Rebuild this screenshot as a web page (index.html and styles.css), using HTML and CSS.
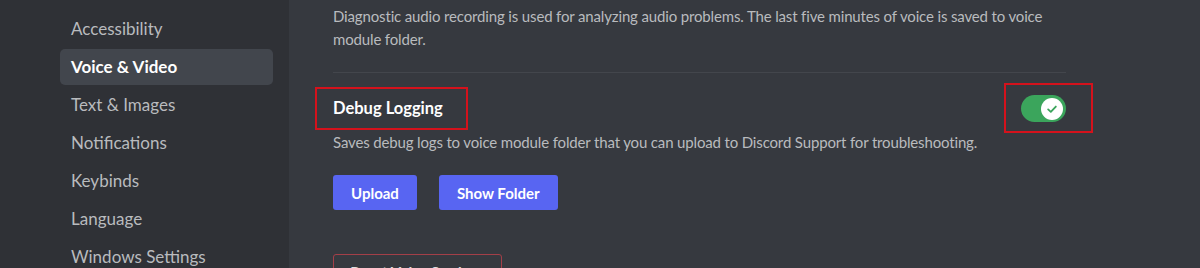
FILE: index.html
```html
<!DOCTYPE html>
<html lang="en">
<head>
<meta charset="utf-8">
<title>Voice &amp; Video Settings</title>
<link rel="stylesheet" href="styles.css">
</head>
<body>
<div class="app">
  <nav class="sidebar">
    <ul class="nav">
      <li class="nav-item">Appearance</li>
      <li class="nav-item">Accessibility</li>
      <li class="nav-item selected">Voice &amp; Video</li>
      <li class="nav-item">Text &amp; Images</li>
      <li class="nav-item">Notifications</li>
      <li class="nav-item">Keybinds</li>
      <li class="nav-item">Language</li>
      <li class="nav-item">Windows Settings</li>
    </ul>
  </nav>
  <main class="content">
    <p class="desc">Diagnostic audio recording is used for analyzing audio problems. The last five minutes of voice is saved to voice module folder.</p>
    <hr class="divider">
    <section class="setting">
      <div class="setting-head">
        <h3 class="title annotated">Debug Logging</h3>
        <div class="toggle-wrap annotated">
          <div class="toggle">
            <span class="knob">
              <svg viewBox="0 0 20 20" width="14" height="14" aria-hidden="true">
                <path d="M4.5 10.5 L8.3 14 L15.5 6.5" fill="none" stroke="#3ba55c" stroke-width="2.6" stroke-linecap="round" stroke-linejoin="round"/>
              </svg>
            </span>
          </div>
        </div>
      </div>
      <p class="desc">Saves debug logs to voice module folder that you can upload to Discord Support for troubleshooting.</p>
      <div class="buttons">
        <button class="btn">Upload</button>
        <button class="btn">Show Folder</button>
      </div>
    </section>
    <button class="reset">Reset Voice Settings</button>
  </main>
</div>
</body>
</html>
```
FILE: styles.css
```css
* { box-sizing: border-box; }
html, body {
  margin: 0;
  padding: 0;
  height: 100%;
  overflow: hidden;
  background: #36393f;
}
body {
  font-family: Lato, "Noto Sans", sans-serif;
  color: #b9bbbe;
}
.app {
  display: flex;
  height: 268px;
}
.sidebar {
  width: 289px;
  flex: none;
  background: #2f3136;
  padding: 0 16px 0 60px;
}
.nav {
  list-style: none;
  margin: -27px 0 0 0;
  padding: 0;
  display: flex;
  flex-direction: column;
  gap: 2px;
}
.nav-item {
  height: 36px;
  line-height: 36px;
  padding-left: 11px;
  border-radius: 5px;
  font-size: 17px;
  color: #b9bbbe;
  white-space: nowrap;
}
.nav-item.selected {
  background: #42464d;
  color: #ffffff;
  font-weight: 700;
}
.content {
  flex: 1;
  padding: 5px 0 0 44px;
  width: 0;
}
.content > * {
  width: 733px;
}
.desc {
  margin: 0;
  font-size: 15px;
  letter-spacing: -0.15px;
  line-height: 23px;
  color: #b9bbbe;
}
.divider {
  margin: 21px 0 0 0;
  border: 0;
  height: 1px;
  background: #43464c;
}
.setting-head {
  margin-top: 22px;
  display: flex;
  justify-content: space-between;
  align-items: center;
  height: 27px;
}
.title {
  margin: 0;
  font-size: 16.5px;
  line-height: 27px;
  font-weight: 700;
  color: #ffffff;
}
.annotated {
  position: relative;
}
.title.annotated::after {
  content: "";
  position: absolute;
  left: -18px;
  right: -25px;
  top: -8px;
  bottom: -8px;
  border: 2px solid #d4121c;
}
.toggle-wrap.annotated::after {
  content: "";
  position: absolute;
  left: -17px;
  right: -27px;
  top: -12px;
  bottom: -11px;
  border: 2px solid #d4121c;
}
.toggle {
  width: 45px;
  height: 27px;
  border-radius: 14px;
  background: #3ba55c;
  display: flex;
  align-items: center;
  justify-content: flex-end;
  padding-right: 3px;
}
.knob {
  width: 22px;
  height: 22px;
  border-radius: 50%;
  background: #ffffff;
  display: flex;
  align-items: center;
  justify-content: center;
}
.setting .desc {
  margin-top: 9px;
}
.buttons {
  margin-top: 21px;
  display: flex;
  gap: 22px;
}
.btn {
  height: 35px;
  padding: 0 18px;
  border: 0;
  border-radius: 3px;
  background: #5865f2;
  color: #ffffff;
  font-family: inherit;
  font-size: 15px;
  font-weight: 700;
}
.reset {
  display: block;
  width: 169px;
  margin-top: 44px;
  height: 36px;
  border: 1px solid #a33f48;
  border-radius: 3px;
  background: transparent;
  color: #dcddde;
  font-family: inherit;
  font-size: 15px;
  font-weight: 700;
  padding: 0;
}
```
